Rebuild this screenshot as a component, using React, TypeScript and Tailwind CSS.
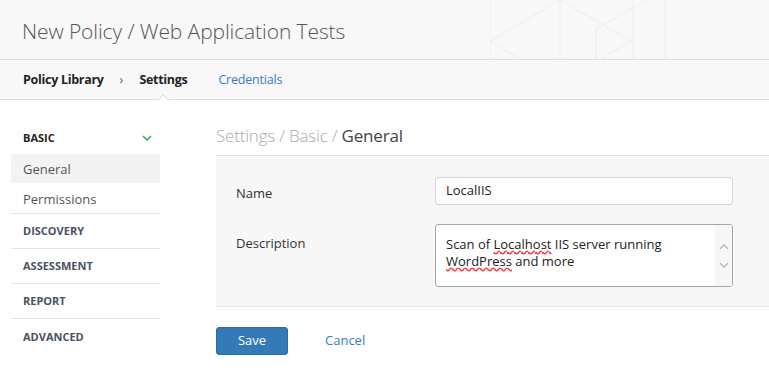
import React from "react";

const font = { fontFamily: '"Open Sans", "Noto Sans", sans-serif' };

const Chevron = ({ className }: { className?: string }) => (
  <svg width="10" height="6" viewBox="0 0 10 6" className={className}>
    <path d="M1 1l4 4 4-4" fill="none" stroke="currentColor" strokeWidth="1.5" />
  </svg>
);

const HeaderArt = () => (
  <svg
    width="260"
    height="59"
    viewBox="0 0 260 59"
    className="absolute left-[490px] top-0 text-[#ececec]"
  >
    <g fill="none" stroke="currentColor" strokeWidth="1">
      <path d="M0 0v59M70 0v59M143 0v59M175 0v59" />
      <path d="M70 0L0 41l30 18M70 0l71 41-30 18" />
      <path d="M106 29l50-29M106 29v30" />
    </g>
  </svg>
);

const sections = ["DISCOVERY", "ASSESSMENT", "REPORT", "ADVANCED"];

export default function App() {
  return (
    <div className="w-[769px] h-[372px] bg-white text-[#333] overflow-hidden" style={font}>
      <div className="relative h-[60px] bg-[#f8f8f8] border-b border-[#dedede] flex items-center px-[22px] pt-[4px] overflow-hidden">
        <HeaderArt />
        <h1 className="relative text-[21px] font-light text-[#555] tracking-[-0.1px]">
          New Policy / Web Application Tests
        </h1>
      </div>
      <div className="relative h-[40px] bg-[#f8f8f8] border-b border-[#dedede] flex items-center px-[23px] pt-[2px] text-[12.5px]">
        <span className="font-bold text-[#222] tracking-[-0.3px]">Policy Library</span>
        <span className="mx-[16px] text-[#555]">›</span>
        <span className="relative font-bold text-[#222] tracking-[-0.3px]">
          Settings
          <span className="absolute left-1/2 -translate-x-1/2 top-[25px] w-[9px] h-[9px] rotate-45 bg-white border-l border-t border-[#dedede]" />
        </span>
        <span className="ml-[31px] text-[#3a7ac2] tracking-[-0.2px]">Credentials</span>
      </div>
      <div className="flex pt-[25px]">
        <div className="w-[149px] ml-[11px] text-[11px]">
          <div className="flex items-center justify-between pl-[12px] pr-[8px] pb-[3px] h-[29px] font-bold text-[#222]">
            <span>BASIC</span>
            <Chevron className="text-[#3aa757]" />
          </div>
          <div className="bg-[#f3f3f3] h-[29px] flex items-center pl-[12px] pt-[2px] text-[13px] text-[#555]">
            General
          </div>
          <div className="h-[31px] flex items-center pl-[12px] pt-[3px] text-[13px] text-[#555] border-b border-[#e3e3e3]">
            Permissions
          </div>
          {sections.map((s, i) => (
            <div
              key={s}
              className={
                "h-[35px] flex items-center pl-[12px] pt-[1px] font-bold text-[#4a5262] " +
                (i < sections.length - 1 ? "border-b border-[#e3e3e3]" : "")
              }
            >
              {s}
            </div>
          ))}
        </div>
        <div className="flex-1 ml-[56px]">
          <div className="h-[30px] flex items-center pb-[9px] text-[17px] font-light text-[#aaa] tracking-[-0.2px]">
            Settings / Basic /&nbsp;<span className="text-[#444] font-normal">General</span>
          </div>
          <div className="bg-[#f7f7f7] border-y border-[#e3e3e3] h-[152px] pt-[21px] px-[20px] text-[13px]">
            <div className="flex items-center h-[28px]">
              <div className="w-[199px] pt-[6px] text-[#333]">Name</div>
              <div className="w-[298px] h-[28px] bg-white border border-[#d6d6d6] rounded-[3px] flex items-center px-[10px] text-[#222]">
                LocalIIS
              </div>
            </div>
            <div className="flex mt-[19px]">
              <div className="w-[199px] pt-[10px] text-[#333]">Description</div>
              <div className="relative w-[298px] h-[63px] bg-white border border-[#a5a5a5] rounded-[3px] pl-[10px] pt-[11px] text-[#222] leading-[17px]">
                <div className="w-[240px]">
                  Scan of <span className="underline decoration-wavy decoration-red-500">Localhost</span> IIS
                  server running <span className="underline decoration-wavy decoration-red-500">WordPress</span> and
                  more
                </div>
                <div className="absolute right-0 top-0 bottom-0 w-[17px] bg-[#f7f7f7] flex flex-col items-center justify-center gap-[12px] text-[#bbb]">
                  <Chevron className="rotate-180" />
                  <Chevron />
                </div>
              </div>
            </div>
          </div>
          <div className="flex items-center mt-[20px]">
            <button className="w-[72px] h-[28px] bg-[#337ab7] border border-[#2e6da4] rounded-[3px] text-white text-[13px]">
              Save
            </button>
            <span className="ml-[37px] text-[13px] text-[#3a7ac2]">Cancel</span>
          </div>
        </div>
      </div>
    </div>
  );
}
